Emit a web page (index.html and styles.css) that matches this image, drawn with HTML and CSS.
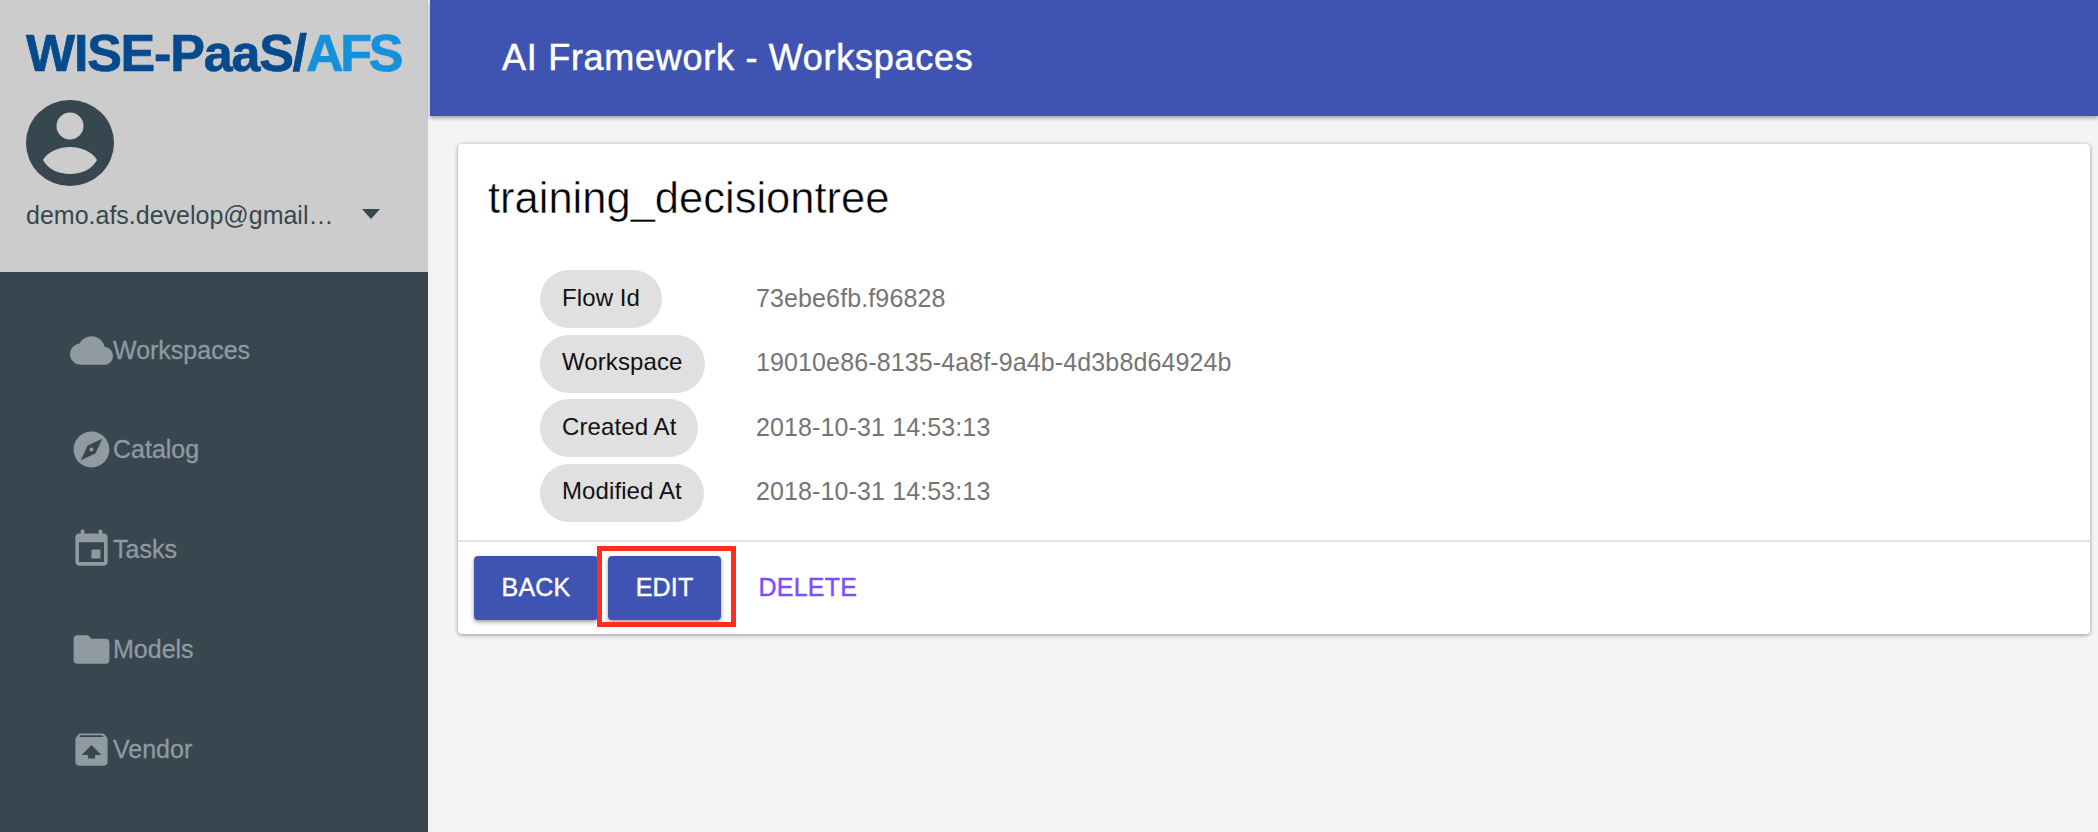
FILE: index.html
```html
<!DOCTYPE html>
<html lang="en">
<head>
    <meta charset="UTF-8">
    <meta name="viewport" content="width=device-width, initial-scale=1.0">
    <title>AI Framework - Workspaces</title>
    <link rel="stylesheet" href="styles.css">
</head>
<body>
    <div class="app">
        <aside class="sidebar">
            <div class="profile">
                <div class="logo">WISE-PaaS/<span class="logo-accent">AFS</span></div>
                <svg class="avatar" viewBox="0 0 88 86">
                    <ellipse cx="44" cy="43" rx="44" ry="43" fill="#37474f"/>
                    <circle cx="44" cy="26" r="13.5" fill="#ccc"/>
                    <path d="M17 60C22 51 34 47 44 47S66 51 71 60C66 69 56 74 44 74S22 69 17 60Z" fill="#ccc"/>
                </svg>
                <div class="account">
                    <span class="email">demo.afs.develop@gmail…</span>
                    <svg class="caret" viewBox="0 0 18 10"><path d="M0 0H18L9 10Z"/></svg>
                </div>
            </div>
            <nav class="nav">
                <a class="nav-item">
                    <svg class="nav-icon" viewBox="0 0 24 24"><path d="M19.35 10.04C18.67 6.59 15.64 4 12 4 9.11 4 6.6 5.64 5.35 8.04 2.34 8.36 0 10.91 0 14c0 3.31 2.69 6 6 6h13c2.76 0 5-2.24 5-5 0-2.64-2.05-4.78-4.65-4.96z"/></svg>
                    <span>Workspaces</span>
                </a>
                <a class="nav-item">
                    <svg class="nav-icon" viewBox="0 0 24 24"><path d="M12 10.9c-.61 0-1.1.49-1.1 1.1s.49 1.1 1.1 1.1c.61 0 1.1-.49 1.1-1.1s-.49-1.1-1.1-1.1zM12 2C6.48 2 2 6.48 2 12s4.48 10 10 10 10-4.48 10-10S17.52 2 12 2zm2.19 12.19L6 18l3.81-8.19L18 6l-3.81 8.19z"/></svg>
                    <span>Catalog</span>
                </a>
                <a class="nav-item">
                    <svg class="nav-icon" viewBox="0 0 24 24"><path d="M17 12h-5v5h5v-5zM16 1v2H8V1H6v2H5c-1.11 0-1.99.9-1.99 2L3 19c0 1.1.89 2 2 2h14c1.1 0 2-.9 2-2V5c0-1.1-.9-2-2-2h-1V1h-2zm3 18H5V8h14v11z"/></svg>
                    <span>Tasks</span>
                </a>
                <a class="nav-item">
                    <svg class="nav-icon" viewBox="0 0 24 24"><path d="M10 4H4c-1.1 0-1.99.9-1.99 2L2 18c0 1.1.9 2 2 2h16c1.1 0 2-.9 2-2V8c0-1.1-.9-2-2-2h-8l-2-2z"/></svg>
                    <span>Models</span>
                </a>
                <a class="nav-item">
                    <svg class="nav-icon" viewBox="0 0 24 24"><path d="M20.55 5.22l-1.39-1.68C18.88 3.21 18.47 3 18 3H6c-.47 0-.88.21-1.15.55L3.46 5.22C3.17 5.57 3 6.01 3 6.5V19c0 1.1.89 2 2 2h14c1.1 0 2-.9 2-2V6.5c0-.49-.17-.93-.45-1.28zM12 9.5l5.5 5.5H14v2h-4v-2H6.5L12 9.5zM5.12 5l.82-1h12l.93 1H5.12z"/></svg>
                    <span>Vendor</span>
                </a>
            </nav>
        </aside>

        <div class="main">
            <header class="topbar">
                <h1 class="topbar-title">AI Framework - Workspaces</h1>
            </header>
            <section class="card">
                <h2 class="card-title">training_decisiontree</h2>
                <div class="details">
                    <div class="detail-row">
                        <div class="chip-cell"><span class="chip">Flow Id</span></div>
                        <span class="value">73ebe6fb.f96828</span>
                    </div>
                    <div class="detail-row">
                        <div class="chip-cell"><span class="chip">Workspace</span></div>
                        <span class="value">19010e86-8135-4a8f-9a4b-4d3b8d64924b</span>
                    </div>
                    <div class="detail-row">
                        <div class="chip-cell"><span class="chip">Created At</span></div>
                        <span class="value">2018-10-31 14:53:13</span>
                    </div>
                    <div class="detail-row">
                        <div class="chip-cell"><span class="chip">Modified At</span></div>
                        <span class="value">2018-10-31 14:53:13</span>
                    </div>
                </div>
                <div class="actions">
                    <button class="btn btn-raised">BACK</button>
                    <div class="highlight-wrap">
                        <button class="btn btn-raised">EDIT</button>
                        <div class="highlight"></div>
                    </div>
                    <button class="btn btn-text">DELETE</button>
                </div>
            </section>
        </div>
    </div>
</body>
</html>
```

FILE: styles.css
```css
* {
    box-sizing: border-box;
}
html, body {
    margin: 0;
    height: 100%;
    overflow: hidden;
}
body {
    background-color: #f4f4f4;
    font-family: "Liberation Sans", Arial, sans-serif;
}
.app {
    display: flex;
    height: 100%;
}

/* sidebar */
.sidebar {
    width: 430px;
    flex-shrink: 0;
    border-right: 2px solid #f1f1f1;
    background-color: #38474f;
    display: flex;
    flex-direction: column;
}
.profile {
    height: 272px;
    background-color: #ccc;
    padding: 27px 0 0 26px;
}
.logo {
    font-size: 52px;
    line-height: 52px;
    font-weight: bold;
    letter-spacing: -1.2px;
    color: #054a8c;
    -webkit-text-stroke: 0.7px currentColor;
    white-space: nowrap;
}
.logo-accent {
    color: #1591dc;
    letter-spacing: -3.2px;
}
.avatar {
    display: block;
    width: 88px;
    height: 86px;
    margin-top: 21px;
}
.account {
    display: flex;
    align-items: center;
    margin-top: 14px;
}
.email {
    width: 310px;
    font-size: 25px;
    line-height: 30px;
    color: #37474f;
    white-space: nowrap;
}
.caret {
    width: 18px;
    height: 10px;
    margin: -2px 0 0 26px;
    fill: #37474f;
}
.nav {
    padding-top: 28px;
}
.nav-item {
    display: flex;
    align-items: center;
    height: 100px;
    padding-left: 70px;
    font-size: 25px;
    color: #8f9aa2;
    -webkit-text-stroke: 0.3px currentColor;
}
.nav-item:first-child {
    margin-bottom: -1px;
}
.nav-icon {
    width: 43px;
    height: 43px;
    fill: #8f9aa2;
    flex-shrink: 0;
}

/* main area */
.main {
    flex: 1;
    min-width: 0;
}
.topbar {
    height: 116px;
    background-color: #3f54b2;
    box-shadow: 0 2px 4px rgba(0, 0, 0, 0.35);
    display: flex;
    align-items: center;
    padding-left: 72px;
}
.topbar-title {
    margin: 0;
    font-size: 36px;
    font-weight: normal;
    letter-spacing: 0.72px;
    color: #fff;
    -webkit-text-stroke: 0.5px #fff;
}
.card {
    margin: 28px 8px 0 28px;
    height: 490px;
    background-color: #fff;
    border-radius: 4px;
    box-shadow: 0 1px 4px rgba(0, 0, 0, 0.4);
    display: flex;
    flex-direction: column;
}
.card-title {
    margin: 0;
    padding: 28px 0 0 30px;
    height: 126px;
    font-size: 43.5px;
    line-height: 52px;
    font-weight: normal;
    color: #000;
    /* white stroke thins the glyphs, the reference title is a light weight */
    -webkit-text-stroke: 0.5px #fff;
}
.details {
    display: flex;
    flex-direction: column;
    gap: 6.6px;
    padding-left: 82px;
    height: 270px;
}
.detail-row {
    display: flex;
    align-items: center;
}
.chip-cell {
    width: 216px;
    flex-shrink: 0;
}
.chip {
    display: inline-flex;
    align-items: center;
    height: 58px;
    padding: 0 22px 3px;
    border-radius: 29px;
    background-color: #e0e0e0;
    font-size: 24px;
    letter-spacing: 0.1px;
    color: #111;
}
.value {
    padding-bottom: 2px;
    font-size: 25px;
    letter-spacing: 0.12px;
    color: #757575;
}
.actions {
    flex: 1;
    border-top: 2px solid #e3e3e3;
    display: flex;
    align-items: flex-start;
    gap: 10px;
    padding: 14px 0 0 16px;
}
.btn {
    height: 64px;
    padding: 0 27.6px 2px;
    border: none;
    border-radius: 4px;
    font-family: inherit;
    font-size: 25px;
    letter-spacing: 0.2px;
    -webkit-text-stroke: 0.4px currentColor;
}
.btn-raised {
    background-color: #3f54b2;
    color: #fff;
    box-shadow: 0 2px 4px rgba(0, 0, 0, 0.4);
}
.btn-text {
    background: none;
    color: #7c4dff;
}
.highlight-wrap {
    position: relative;
}
/* red annotation box drawn over the EDIT button */
.highlight {
    position: absolute;
    top: -10px;
    right: -15px;
    bottom: -7px;
    left: -11px;
    border: 5px solid #ff2d1f;
}
```
